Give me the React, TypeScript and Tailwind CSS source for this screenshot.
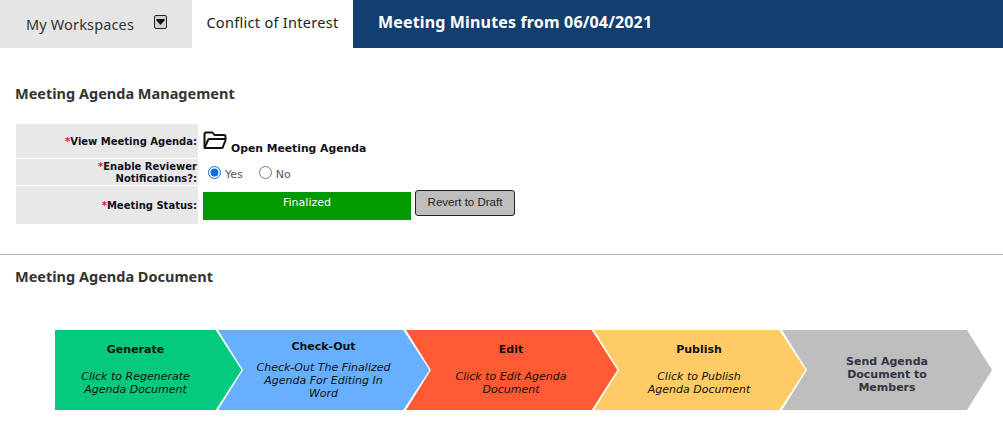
const sans = "font-['DejaVu_Sans',sans-serif]";
const noto = "font-['Noto_Sans',sans-serif]";

function Req() {
  return <span className="text-[#f0143c]">*</span>;
}

function Row({ h, label, children }: { h: string; label: React.ReactNode; children: React.ReactNode }) {
  return (
    <div className={`flex ${h}`}>
      <div className="w-[182px] shrink-0 bg-[#e8e8e8] flex items-center justify-end text-right font-bold text-[10px] leading-[12px] text-[#111122] pr-px pt-[2px]">
        <div>{label}</div>
      </div>
      <div className="ml-[5px] flex-1 min-w-0">{children}</div>
    </div>
  );
}

const steps = [
  { t: "Generate", d: "Click to Regenerate Agenda Document", c: "bg-[#05c97f]", box: "w-[187px] [clip-path:polygon(0_0,160.700px_0,186.500px_50%,160.700px_100%,0_100%)] pr-[26px] pl-0 pt-[13px]", tw: "w-[150px] mt-[14px]" },
  { t: "Check-Out", d: "Check-Out The Finalized Agenda For Editing In Word", c: "bg-[#66b0ff]", box: "w-[212px] -ml-[24px] [clip-path:polygon(0_0,185.300px_0,211.500px_50%,185.300px_100%,0_100%,25px_50%)] pl-[26px] pr-[27px] pt-[10px]", tw: "w-[150px] mt-[8px]" },
  { t: "Edit", d: "Click to Edit Agenda Document", c: "bg-[#ff5a33]", box: "w-[212px] -ml-[24px] [clip-path:polygon(0_0,185.700px_0,211.300px_50%,185.700px_100%,0_100%,25px_50%)] pl-[25px] pr-[27px] pt-[13px]", tw: "w-[125px] mt-[14px]" },
  { t: "Publish", d: "Click to Publish Agenda Document", c: "bg-[#ffcb66]", box: "w-[212px] -ml-[24px] [clip-path:polygon(0_0,185.300px_0,211.500px_50%,185.300px_100%,0_100%,25px_50%)] pl-[25px] pr-[27px] pt-[13px]", tw: "w-[120px] mt-[14px]" },
];

export default function App() {
  return (
    <div className={`w-[1003px] h-[428px] bg-white overflow-hidden ${sans}`}>
      <div className={`flex h-[48px] ${noto}`}>
        <div className="w-[192px] bg-[#e5e5e5] flex items-start pl-[26px] pt-[15px] text-[14.500px] leading-[18px] text-[#333333] tracking-[0.15px] whitespace-nowrap">
          <span>My Workspaces</span>
          <svg className="ml-[20px]" width="13" height="14" viewBox="0 0 13 14">
            <rect x="0.5" y="0.5" width="12" height="13" rx="1.5" fill="#cfcfcf" stroke="#222" />
            <path d="M2.500 4h8v1.500l-4 4.500-4-4.500z" fill="#111" />
          </svg>
        </div>
        <div className="w-[161px] bg-white flex justify-center pt-[13px] text-[14.500px] leading-[18px] text-[#222222] tracking-[0.3px] whitespace-nowrap">
          Conflict of Interest
        </div>
        <div className="flex-1 bg-[#123f6f] pl-[25px] pt-[13px] text-[16px] leading-[18px] font-bold text-white tracking-[0.16px] whitespace-nowrap">
          Meeting Minutes from 06/04/2021
        </div>
      </div>

      <div className={`pl-[15px] pt-[36px] text-[14.500px] leading-[18px] font-bold text-[#333333] ${noto}`}>Meeting Agenda Management</div>

      <div className="ml-[16px] mt-[22px] flex flex-col gap-px">
        <Row h="h-[34px]" label={<><Req />View Meeting Agenda:</>}>
          <div className="flex items-start pt-[7px]">
            <svg width="24" height="19" viewBox="0 0 24 19" fill="none" stroke="#111" strokeWidth="2" strokeLinejoin="round">
              <path d="M1.500 16V3a1.500 1.500 0 0 1 1.500-1.500h6.500l2 2.500h9.500a1.500 1.500 0 0 1 1.500 1.500V8" />
              <path d="M1.500 17 5 9a1.500 1.500 0 0 1 1.400-1H21.500a1 1 0 0 1 1 1.300L20 15.500a1.500 1.500 0 0 1-1.500 1.500H2z" />
            </svg>
            <span className="ml-[4px] mt-[11px] font-bold text-[10.800px] leading-[14px] text-[#111122]">Open Meeting Agenda</span>
          </div>
        </Row>
        <Row h="h-[26px]" label={<><Req />Enable Reviewer<br />Notifications?:</>}>
          <div className="flex items-center h-full pl-[5px] pt-px text-[11px] text-[#555555]">
            <input type="radio" name="notify" defaultChecked className="m-0 w-[13px] h-[13px] accent-[#0a6ee0]" />
            <span className="ml-[4px] mt-[6px]">Yes</span>
            <input type="radio" name="notify" className="m-0 ml-[16px] w-[13px] h-[13px]" />
            <span className="ml-[4px] mt-[6px]">No</span>
          </div>
        </Row>
        <Row h="h-[38px]" label={<><Req />Meeting Status:</>}>
          <div className="flex items-start pt-[6px]">
            <div className="w-[208px] h-[28px] bg-[#009900] text-white text-[11px] leading-[22px] text-center">Finalized</div>
            <button className="ml-[4px] -mt-[2px] w-[100px] h-[26px] bg-[#bebebe] border border-[#222222] rounded-[3px] text-[11.500px] font-['Liberation_Sans',sans-serif] text-[#222222]">Revert to Draft</button>
          </div>
        </Row>
      </div>

      <div className="mt-[30px] h-px bg-[#b5b5b5]" />

      <div className={`pl-[15px] pt-[12px] text-[14.500px] leading-[18px] font-bold text-[#333333] ${noto}`}>Meeting Agenda Document</div>

      <div className="ml-[55px] mt-[45px] flex h-[80px]">
        {steps.map((s) => (
          <div key={s.t} className={`${s.c} ${s.box} shrink-0 flex flex-col items-center text-[#111111]`}>
            <div className="font-bold text-[11px] leading-[13px] text-center">{s.t}</div>
            <div className={`${s.tw} italic text-[11px] leading-[13px] text-center`}>{s.d}</div>
          </div>
        ))}
        <div className="w-[210px] -ml-[24px] shrink-0 bg-[#bebebe] [clip-path:polygon(0_0,185px_0,210px_50%,185px_100%,0_100%,25px_50%)] pl-[25px] pr-[25px] pt-[8px] flex items-center justify-center text-center font-bold text-[11px] leading-[13px] text-[#333344]">
          <div className="w-[100px]">Send Agenda Document to Members</div>
        </div>
      </div>
    </div>
  );
}
